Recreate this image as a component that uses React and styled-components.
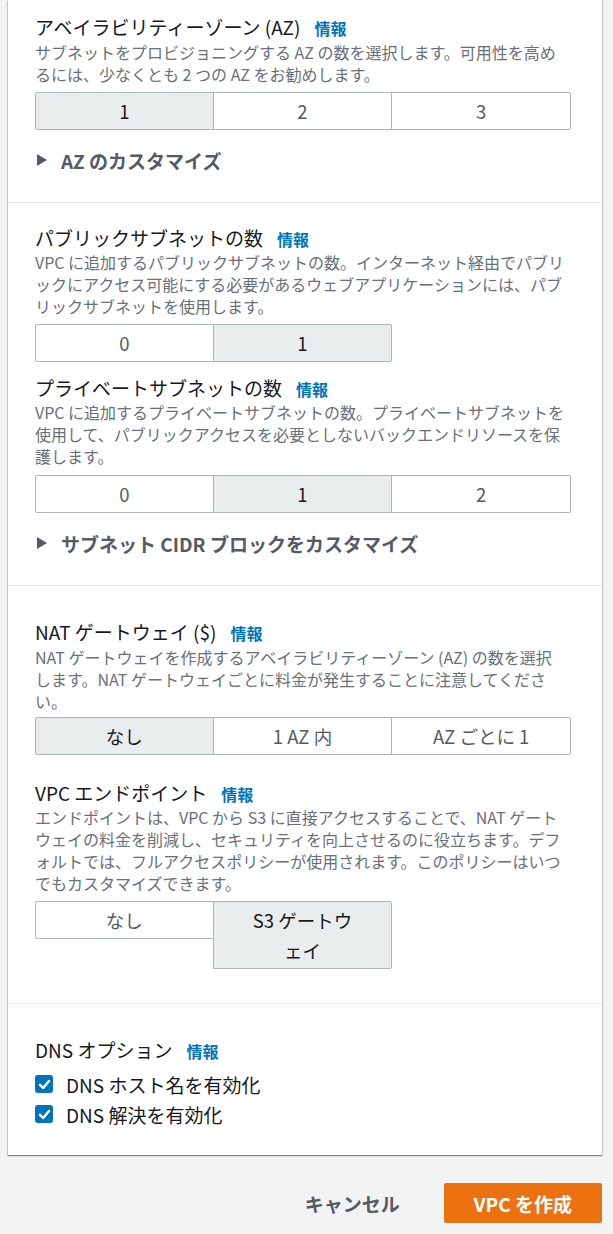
import React from "react";
import styled, { createGlobalStyle } from "styled-components";

const Global = createGlobalStyle`
  html, body {
    margin: 0;
    padding: 0;
    background: #f2f3f3;
  }
  body {
    font-family: "Noto Sans CJK JP", "Noto Sans", sans-serif;
    color: #16191f;
  }
  * { box-sizing: border-box; }
`;

const Page = styled.div`
  width: 613px;
  padding-bottom: 11px;
`;

const Panel = styled.div`
  margin: 0 11px 0 8px;
  background: #ffffff;
  box-shadow: 0 1px 1px 0 rgba(0, 28, 36, 0.3),
    1px 1px 1px 0 rgba(0, 28, 36, 0.15),
    -1px 1px 1px 0 rgba(0, 28, 36, 0.15);
`;

const Section = styled.section`
  padding: ${(p) => p.$top}px 31px ${(p) => p.$bottom}px 27px;
  border-top: ${(p) => (p.$first ? "none" : "1px solid #eaeded")};
`;

const Field = styled.div`
  margin-top: ${(p) => p.$gap || 0}px;
`;

const LabelRow = styled.div`
  display: flex;
  align-items: baseline;
  height: 24px;
  line-height: 24px;
`;

const LabelText = styled.span`
  font-size: 19px;
  color: #16191f;
`;

const InfoLink = styled.a`
  margin-left: 14px;
  font-size: 16px;
  font-weight: 700;
  color: #0073bb;
  text-decoration: none;
`;

const Description = styled.div`
  margin-top: ${(p) => p.$mt ?? 1}px;
  font-size: 16px;
  line-height: 22px;
  color: #687078;
`;

const Line = styled.span`
  display: block;
  white-space: nowrap;
`;

const Segments = styled.div`
  display: grid;
  grid-template-columns: repeat(3, 1fr);
  align-items: start;
  margin-top: ${(p) => p.$mt ?? 7}px;
`;

const SegButton = styled.button`
  font-family: inherit;
  font-size: 18.5px;
  line-height: 30px;
  padding: 3px 32px;
  margin: 0;
  margin-left: ${(p) => (p.$first ? 0 : -1)}px;
  border: 1px solid #aab7b8;
  border-radius: ${(p) =>
    p.$first ? "2px 0 0 2px" : p.$last ? "0 2px 2px 0" : "0"};
  background: ${(p) => (p.$selected ? "#eaeded" : "#ffffff")};
  color: ${(p) => (p.$selected ? "#16191f" : "#545b64")};
  text-align: center;
  line-break: loose;
  cursor: pointer;
`;

const Expander = styled.div`
  display: flex;
  align-items: center;
  gap: 14px;
  margin-top: 18px;
  height: 24px;
  padding-left: 2px;
  font-size: 19px;
  font-weight: 700;
  color: #545b64;
`;

const CheckList = styled.div`
  margin-top: 7px;
  display: flex;
  flex-direction: column;
`;

const CheckRow = styled.label`
  display: flex;
  align-items: center;
  gap: 13px;
  height: 30px;
  font-size: 19px;
  color: #16191f;
`;

const CheckBox = styled.span`
  width: 18px;
  height: 18px;
  border-radius: 3px;
  background: #0073bb;
  display: flex;
  align-items: center;
  justify-content: center;
  flex: 0 0 18px;
`;

const Footer = styled.div`
  display: flex;
  justify-content: flex-end;
  align-items: center;
  gap: 24px;
  margin-top: 28px;
  padding-right: 11px;
`;

const CancelButton = styled.button`
  font-family: inherit;
  font-size: 19px;
  font-weight: 700;
  color: #545b64;
  background: transparent;
  border: none;
  height: 40px;
  padding: 0 20px;
`;

const PrimaryButton = styled.button`
  font-family: inherit;
  font-size: 19px;
  font-weight: 700;
  color: #ffffff;
  background: #ec7211;
  border: none;
  border-radius: 2px;
  height: 40px;
  padding: 0 30px;
`;

function Label({ text }) {
  return (
    <LabelRow>
      <LabelText>{text}</LabelText>
      <InfoLink href="#">情報</InfoLink>
    </LabelRow>
  );
}

function Desc({ lines, mt }) {
  return (
    <Description $mt={mt}>
      {lines.map((l, i) => (
        <Line key={i}>{l}</Line>
      ))}
    </Description>
  );
}

function Segmented({ options, selected, mt }) {
  return (
    <Segments $mt={mt}>
      {options.map((o, i) => (
        <SegButton
          key={o}
          $first={i === 0}
          $last={i === options.length - 1}
          $selected={i === selected}
        >
          {o}
        </SegButton>
      ))}
    </Segments>
  );
}

function Caret() {
  return (
    <svg width="10" height="12" viewBox="0 0 10 12">
      <path d="M0 0 L10 6 L0 12 Z" fill="#545b64" />
    </svg>
  );
}

function Check() {
  return (
    <svg width="13" height="13" viewBox="0 0 13 13">
      <path
        d="M2 6.8 L5.2 10 L11 3"
        fill="none"
        stroke="#ffffff"
        strokeWidth="2.4"
        strokeLinecap="round"
        strokeLinejoin="round"
      />
    </svg>
  );
}

export default function App() {
  return (
    <Page>
      <Global />
      <Panel>
        <Section $first $top={15} $bottom={30}>
          <Field>
            <Label text="アベイラビリティーゾーン (AZ)" />
            <Desc
              mt={2}
              lines={[
                "サブネットをプロビジョニングする AZ の数を選択します。可用性を高め",
                "るには、少なくとも 2 つの AZ をお勧めします。",
              ]}
            />
            <Segmented options={["1", "2", "3"]} selected={0} />
          </Field>
          <Expander>
            <Caret />
            <span>AZ のカスタマイズ</span>
          </Expander>
        </Section>

        <Section $top={23} $bottom={30}>
          <Field>
            <Label text="パブリックサブネットの数" />
            <Desc
              lines={[
                "VPC に追加するパブリックサブネットの数。インターネット経由でパブリ",
                "ックにアクセス可能にする必要があるウェブアプリケーションには、パブ",
                "リックサブネットを使用します。",
              ]}
            />
            <Segmented options={["0", "1"]} selected={1} />
          </Field>
          <Field $gap={14}>
            <Label text="プライベートサブネットの数" />
            <Desc
              lines={[
                "VPC に追加するプライベートサブネットの数。プライベートサブネットを",
                "使用して、パブリックアクセスを必要としないバックエンドリソースを保",
                "護します。",
              ]}
            />
            <Segmented options={["0", "1", "2"]} selected={1} mt={8} />
          </Field>
          <Expander>
            <Caret />
            <span>サブネット CIDR ブロックをカスタマイズ</span>
          </Expander>
        </Section>

        <Section $top={34} $bottom={34}>
          <Field>
            <Label text="NAT ゲートウェイ ($)" />
            <Desc
              mt={2}
              lines={[
                "NAT ゲートウェイを作成するアベイラビリティーゾーン (AZ) の数を選択",
                "します。NAT ゲートウェイごとに料金が発生することに注意してくださ",
                "い。",
              ]}
            />
            <Segmented options={["なし", "1 AZ 内", "AZ ごとに 1"]} selected={0} mt={5} />
          </Field>
          <Field $gap={26}>
            <Label text="VPC エンドポイント" />
            <Desc
              lines={[
                "エンドポイントは、VPC から S3 に直接アクセスすることで、NAT ゲート",
                "ウェイの料金を削減し、セキュリティを向上させるのに役立ちます。デフ",
                "ォルトでは、フルアクセスポリシーが使用されます。このポリシーはいつ",
                "でもカスタマイズできます。",
              ]}
            />
            <Segmented options={["なし", "S3 ゲートウェイ"]} selected={1} />
          </Field>
        </Section>

        <Section $top={34} $bottom={26}>
          <Field>
            <Label text="DNS オプション" />
            <CheckList>
              <CheckRow>
                <CheckBox>
                  <Check />
                </CheckBox>
                <span>DNS ホスト名を有効化</span>
              </CheckRow>
              <CheckRow>
                <CheckBox>
                  <Check />
                </CheckBox>
                <span>DNS 解決を有効化</span>
              </CheckRow>
            </CheckList>
          </Field>
        </Section>
      </Panel>
      <Footer>
        <CancelButton>キャンセル</CancelButton>
        <PrimaryButton>VPC を作成</PrimaryButton>
      </Footer>
    </Page>
  );
}
